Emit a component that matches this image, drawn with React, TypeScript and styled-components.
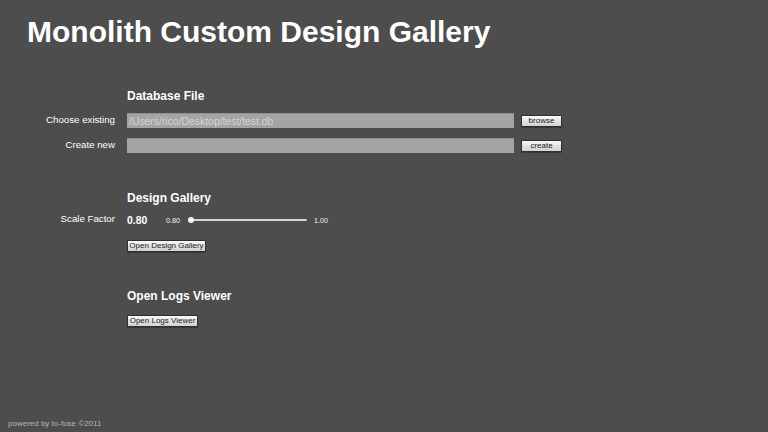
import React from 'react'
import styled, { createGlobalStyle } from 'styled-components'

const GlobalStyle = createGlobalStyle`
  html, body {
    margin: 0;
    padding: 0;
    background: #4d4d4d;
  }
  body {
    font-family: "Liberation Sans", Arial, sans-serif;
  }
`

const Page = styled.div`
  height: 432px;
  background: #4d4d4d;
  color: #fff;
  padding: 16px 0 0 0;
  box-sizing: border-box;
  position: relative;
  overflow: hidden;
`

const Title = styled.h1`
  margin: 0 0 0 27px;
  font-size: 30px;
  line-height: 32px;
  font-weight: bold;
  color: #fff;
`

const Section = styled.div<{ top: number }>`
  display: grid;
  grid-template-columns: 115px 1fr;
  column-gap: 12px;
  margin-top: ${p => p.top}px;
  align-items: center;
`

const Heading = styled.h2<{ mb: number }>`
  grid-column: 2;
  margin: 0 0 ${p => p.mb}px 0;
  font-size: 12px;
  line-height: 14px;
  font-weight: bold;
  color: #fff;
`

const Label = styled.div<{ mt?: number }>`
  grid-column: 1;
  text-align: right;
  font-size: 9.7px;
  color: #ffffff;
  margin-top: ${p => p.mt || 0}px;
  padding-bottom: 3px;
`

const Field = styled.div<{ mt?: number }>`
  grid-column: 2;
  display: flex;
  align-items: center;
  gap: 7px;
  margin-top: ${p => p.mt || 0}px;
`

const Input = styled.input`
  width: 387px;
  height: 15px;
  box-sizing: border-box;
  background: #a4a4a4;
  border: none;
  border-top: 1px solid #8f8f8f;
  padding: 0 2px;
  font-family: "Liberation Sans", Arial, sans-serif;
  font-size: 10.4px;
  color: #d4d4d4;
  outline: none;
`

const Button = styled.button<{ w: number }>`
  width: ${p => p.w}px;
  height: 12px;
  box-sizing: border-box;
  padding: 0;
  border: 1px solid #2e2e2e;
  border-radius: 1px;
  background: linear-gradient(#fafafa, #e2e2e2 50%, #d2d2d2);
  font-family: "Liberation Sans", Arial, sans-serif;
  font-size: 8px;
  line-height: 10px;
  color: #222;
  box-shadow: 0 1px 0 rgba(0, 0, 0, 0.25);
`

const ScaleValue = styled.span`
  font-size: 10.4px;
  font-weight: bold;
  color: #fff;
  width: 32px;
`

const SmallNum = styled.span`
  font-size: 7.2px;
  color: #f0f0f0;
`

const Track = styled.div`
  position: relative;
  width: 117px;
  height: 2px;
  background: #d6d6d6;
  margin: 0 0 0 3px;
  border-radius: 1px;
`

const Knob = styled.div`
  position: absolute;
  left: -2px;
  top: -2px;
  width: 6px;
  height: 6px;
  border-radius: 50%;
  background: #f4f4f4;
`

const Footer = styled.div`
  position: absolute;
  left: 8px;
  bottom: 4px;
  font-size: 8px;
  color: #b4b4b4;
`

export default function App() {
  return (
    <>
      <GlobalStyle />
      <Page>
        <Title>Monolith Custom Design Gallery</Title>

        <Section top={41}>
          <Heading mb={10}>Database File</Heading>
          <Label>Choose existing</Label>
          <Field>
            <Input defaultValue="/Users/rico/Desktop/test/test.db" />
            <Button w={41}>browse</Button>
          </Field>
          <Label mt={10}>Create new</Label>
          <Field mt={10}>
            <Input />
            <Button w={41}>create</Button>
          </Field>
        </Section>

        <Section top={38}>
          <Heading mb={8}>Design Gallery</Heading>
          <Label>Scale Factor</Label>
          <Field>
            <ScaleValue>0.80</ScaleValue>
            <SmallNum>0.80</SmallNum>
            <Track>
              <Knob />
            </Track>
            <SmallNum>1.00</SmallNum>
          </Field>
          <Field mt={13}>
            <Button w={79}>Open Design Gallery</Button>
          </Field>
        </Section>

        <Section top={37}>
          <Heading mb={12}>Open Logs Viewer</Heading>
          <Field>
            <Button w={71}>Open Logs Viewer</Button>
          </Field>
        </Section>

        <Footer>powered by to-fuse ©2011</Footer>
      </Page>
    </>
  )
}
